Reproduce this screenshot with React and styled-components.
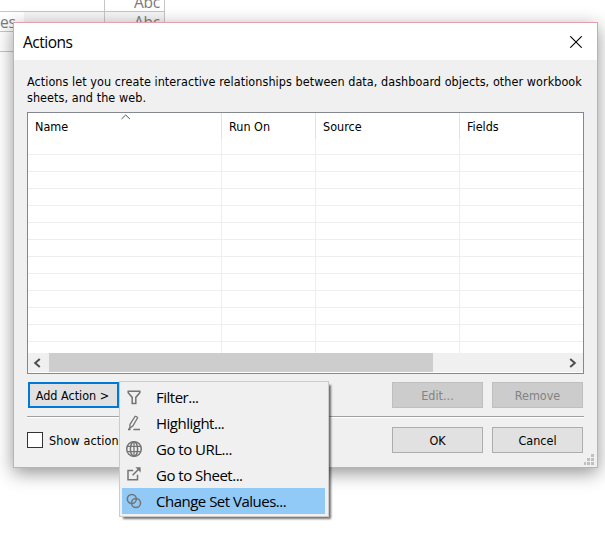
import { useState } from 'react';
import styled, { createGlobalStyle, css } from 'styled-components';

const GlobalStyle = createGlobalStyle`
  * { box-sizing: border-box; }
  body {
    margin: 0;
    background: #fff;
    overflow: hidden;
    color: #000;
    font-family: 'DejaVu Sans Condensed', 'DejaVu Sans', sans-serif;
    font-stretch: condensed;
    font-size: 12.5px;
  }
`

const Window = styled.main`
  position: relative;
  width: 605px;
  height: 551px;
  overflow: hidden;
`

const Sheet = styled.div`
  display: grid;
  grid-template-columns: 105px 60px;
  grid-template-rows: 12px 20px 20px;
  width: 165px;
  font: 15.5px/17px 'Open Sans', sans-serif;
  letter-spacing: -0.2px;
  color: #7b7b7b;
`

const SheetCell = styled.div`
  display: flex;
  align-items: flex-end;
  justify-content: ${({ $left }) => ($left ? 'flex-start' : 'flex-end')};
  border-right: 1px solid #c6c6c6;
  border-bottom: 1px solid #c6c6c6;
  padding-right: ${({ $left }) => ($left ? 0 : 4)}px;
  background: linear-gradient(90deg, #fff ${({ $indent = 0 }) => $indent}px, ${({ $shade }) => ($shade ? '#f5f5f5' : '#fff')} 0);
`

const Dialog = styled.section`
  position: absolute;
  left: 13px;
  top: 22px;
  width: 585px;
  height: 446px;
  border: 1px solid #e3a0a8;
  background: #f0f0f0;
  box-shadow: 0 5px 17px rgba(0, 0, 0, 0.42);
`

const TitleBar = styled.header`
  display: flex;
  align-items: center;
  justify-content: space-between;
  height: 37px;
  padding: 0 15px 0 9px;
  background: #fff;
  font-family: 'Open Sans', sans-serif;
  font-stretch: normal;
  font-size: 15.5px;
`

const Title = styled.h1`
  margin: 0;
  font: inherit;
  letter-spacing: -0.5px;
`

const Body = styled.div`
  padding: 13px 13px 0;
`

const Intro = styled.p`
  height: 39px;
  margin: 0;
  padding-top: 1px;
  line-height: 16px;
  letter-spacing: 0.06px;
  white-space: nowrap;
`

const Table = styled.div`
  width: 557px;
  height: 262px;
  border: 1px solid #828790;
  background: #fff;
`

const Columns = styled.div`
  display: grid;
  grid-template-columns: 194px 94px 144px 1fr;
  height: 240px;
`

const Column = styled.div`
  border-right: 1px solid #eee;
  background: repeating-linear-gradient(#fff 0 16px, #eee 16px 17px) 0 25px no-repeat;

  &:last-child { border-right: 0; }
`

const ColumnHead = styled.div`
  position: relative;
  height: 26px;
  margin-right: ${({ $last }) => ($last ? 0 : -1)}px;
  padding: 6px 0 0 7px;
  line-height: 16px;
  border-right: 1px solid ${({ $last }) => ($last ? '#fff' : '#e2e2e2')};
  background: #fff;
`

const SortMark = styled.svg`
  position: absolute;
  left: 93px;
  top: 1px;
`

const ScrollBar = styled.div`
  display: grid;
  grid-template-columns: 21px 384px 1fr;
  height: 19px;
  background: #f0f0f0;
`

const ScrollThumb = styled.div`
  background: #cdcdcd;
`

const ScrollArrow = styled.div`
  display: flex;
  align-items: center;
  justify-content: ${({ $end }) => ($end ? 'flex-end' : 'flex-start')};
  padding: 0 6px 0 5px;
`

const ButtonRow = styled.div`
  display: flex;
  gap: 9px;
  width: 556px;
  padding-left: 1px;
  padding-top: ${({ $top }) => $top}px;
`

const Button = styled.button`
  width: 91px;
  height: 26px;
  padding: 0;
  border: 1px solid #adadad;
  background: #e1e1e1;
  color: #000;
  font: inherit;
  font-stretch: condensed;

  &:disabled {
    border-color: #bfbfbf;
    background: #ccc;
    color: #838383;
  }

  ${({ $focused }) => $focused && css`
    border: 2px solid #0078d7;
    padding-right: 2px;
  `}
`

const Spacer = styled.span`
  flex: 1;
`

const Divider = styled.hr`
  width: 557px;
  height: 2px;
  margin: 8px 0 0;
  border: 0;
  border-top: 1px solid #a0a0a0;
  background: #fff;
`

const CheckLabel = styled.label`
  display: flex;
  align-items: center;
  gap: 6px;
  height: 26px;
  margin-left: -1px;
  letter-spacing: 0.1px;
  white-space: nowrap;
`

const CheckBox = styled.input`
  appearance: none;
  width: 16px;
  height: 16px;
  margin: 0;
  border: 1px solid #333;
  background: #fff;
`

const Grip = styled.svg`
  position: absolute;
  right: 3px;
  bottom: 2px;
`

const Menu = styled.ul`
  position: absolute;
  left: 119px;
  top: 381px;
  width: 210px;
  height: 136px;
  margin: 0;
  padding: 2px 3px 2px 2px;
  list-style: none;
  border: 1px solid #ccc;
  background: #f0f0f0;
  box-shadow: 3px 3px 2px -1px rgba(0, 0, 0, 0.55);
  font-family: 'Open Sans', sans-serif;
  font-stretch: normal;
  font-size: 15px;
  letter-spacing: -0.5px;
`

const MenuItem = styled.li`
  display: flex;
  align-items: center;
  gap: 12px;
  height: 26px;
  padding-left: 2px;
  background: ${({ $active }) => ($active ? '#91c9f7' : 'transparent')};
`

const MenuIcon = styled.svg`
  width: 20px;
  height: 20px;
  fill: none;
  stroke: #747474;
  stroke-width: 1.5;
`

const columns = ['Name', 'Run On', 'Source', 'Fields']

const menuItems = [
  {
    label: 'Filter...',
    icon: <path d="M4.2 4.2h11.6v1.6l-4 4.6v6H8.2v-6l-4-4.6z" />,
  },
  {
    label: 'Highlight...',
    icon: (
      <>
        <path d="M6 11.3 11 3.5q1.8-.4 2.6 1.2L9 12.9l-3.2 2.2zM5.8 15l-1.5 1.8" strokeWidth="1.3" />
        <path d="M4 16.4h2.6M9.4 16.4H16" />
      </>
    ),
  },
  {
    label: 'Go to URL...',
    icon: (
      <>
        <circle cx="10" cy="10" r="7.3" />
        <ellipse cx="10" cy="10" rx="3.6" ry="7.3" />
        <path d="M10 2.7v14.6M3.4 7.4h13.2M3.4 12.6h13.2" strokeWidth="1.3" />
      </>
    ),
  },
  {
    label: 'Go to Sheet...',
    icon: (
      <>
        <path d="M9.2 5.6H4v9.2h9.5v-5" />
        <path d="m8.6 10.3 6-6" />
        <path d="M11.4 2.2h5.2v5.2z" fill="#747474" stroke="none" />
      </>
    ),
  },
  {
    label: 'Change Set Values...',
    icon: (
      <>
        <circle cx="7.8" cy="8" r="4.5" />
        <circle cx="12" cy="12" r="4.5" />
      </>
    ),
  },
]

export default function App() {
  const [active, setActive] = useState(4)

  return (
    <>
      <GlobalStyle />
      <Window>
        <Sheet>
          <SheetCell $left />
          <SheetCell>Abc</SheetCell>
          <SheetCell $left $shade $indent={24}>es</SheetCell>
          <SheetCell $shade>Abc</SheetCell>
          <SheetCell $left />
          <SheetCell />
        </Sheet>

        <Dialog>
          <TitleBar>
            <Title>Actions</Title>
            <svg width="12" height="12" fill="none" stroke="#000" strokeWidth="1.1">
              <path d="m.3.3 11.4 11.4M11.7.3.3 11.7" />
            </svg>
          </TitleBar>
          <Body>
            <Intro>
              Actions let you create interactive relationships between data, dashboard objects, other workbook
              <br />
              sheets, and the web.
            </Intro>
            <Table>
              <Columns>
                {columns.map((name, index) => (
                  <Column key={name}>
                    <ColumnHead $last={index === columns.length - 1}>
                      {name}
                      {index === 0 && (
                        <SortMark width="10" height="6" fill="none" stroke="#555">
                          <path d="m.5 5 4.2-4 4.2 4" />
                        </SortMark>
                      )}
                    </ColumnHead>
                  </Column>
                ))}
              </Columns>
              <ScrollBar>
                <ScrollArrow>
                  <svg width="8" height="10" fill="none" stroke="#505050" strokeWidth="2">
                    <path d="M6.8 1 2.2 5l4.6 4" />
                  </svg>
                </ScrollArrow>
                <ScrollThumb />
                <ScrollArrow $end>
                  <svg width="8" height="10" fill="none" stroke="#505050" strokeWidth="2">
                    <path d="M1.2 1l4.6 4-4.6 4" />
                  </svg>
                </ScrollArrow>
              </ScrollBar>
            </Table>
            <ButtonRow $top={8}>
              <Button $focused>Add Action &gt;</Button>
              <Spacer />
              <Button disabled>Edit...</Button>
              <Button disabled>Remove</Button>
            </ButtonRow>
            <Divider />
            <ButtonRow $top={9}>
              <CheckLabel>
                <CheckBox type="checkbox" />
                Show action
              </CheckLabel>
              <Spacer />
              <Button>OK</Button>
              <Button>Cancel</Button>
            </ButtonRow>
          </Body>
          <Grip width="10" height="11" fill="#bfbfbf">
            <path d="M7 0h3v3H7zM3 4h3v3H3zM7 4h3v3H7zM0 8h2v3H0zM3 8h3v3H3zM7 8h3v3H7z" />
          </Grip>
        </Dialog>

        <Menu>
          {menuItems.map((item, index) => (
            <MenuItem key={item.label} $active={index === active} onMouseEnter={() => setActive(index)}>
              <MenuIcon viewBox="0 0 20 20">{item.icon}</MenuIcon>
              {item.label}
            </MenuItem>
          ))}
        </Menu>
      </Window>
    </>
  )
}
